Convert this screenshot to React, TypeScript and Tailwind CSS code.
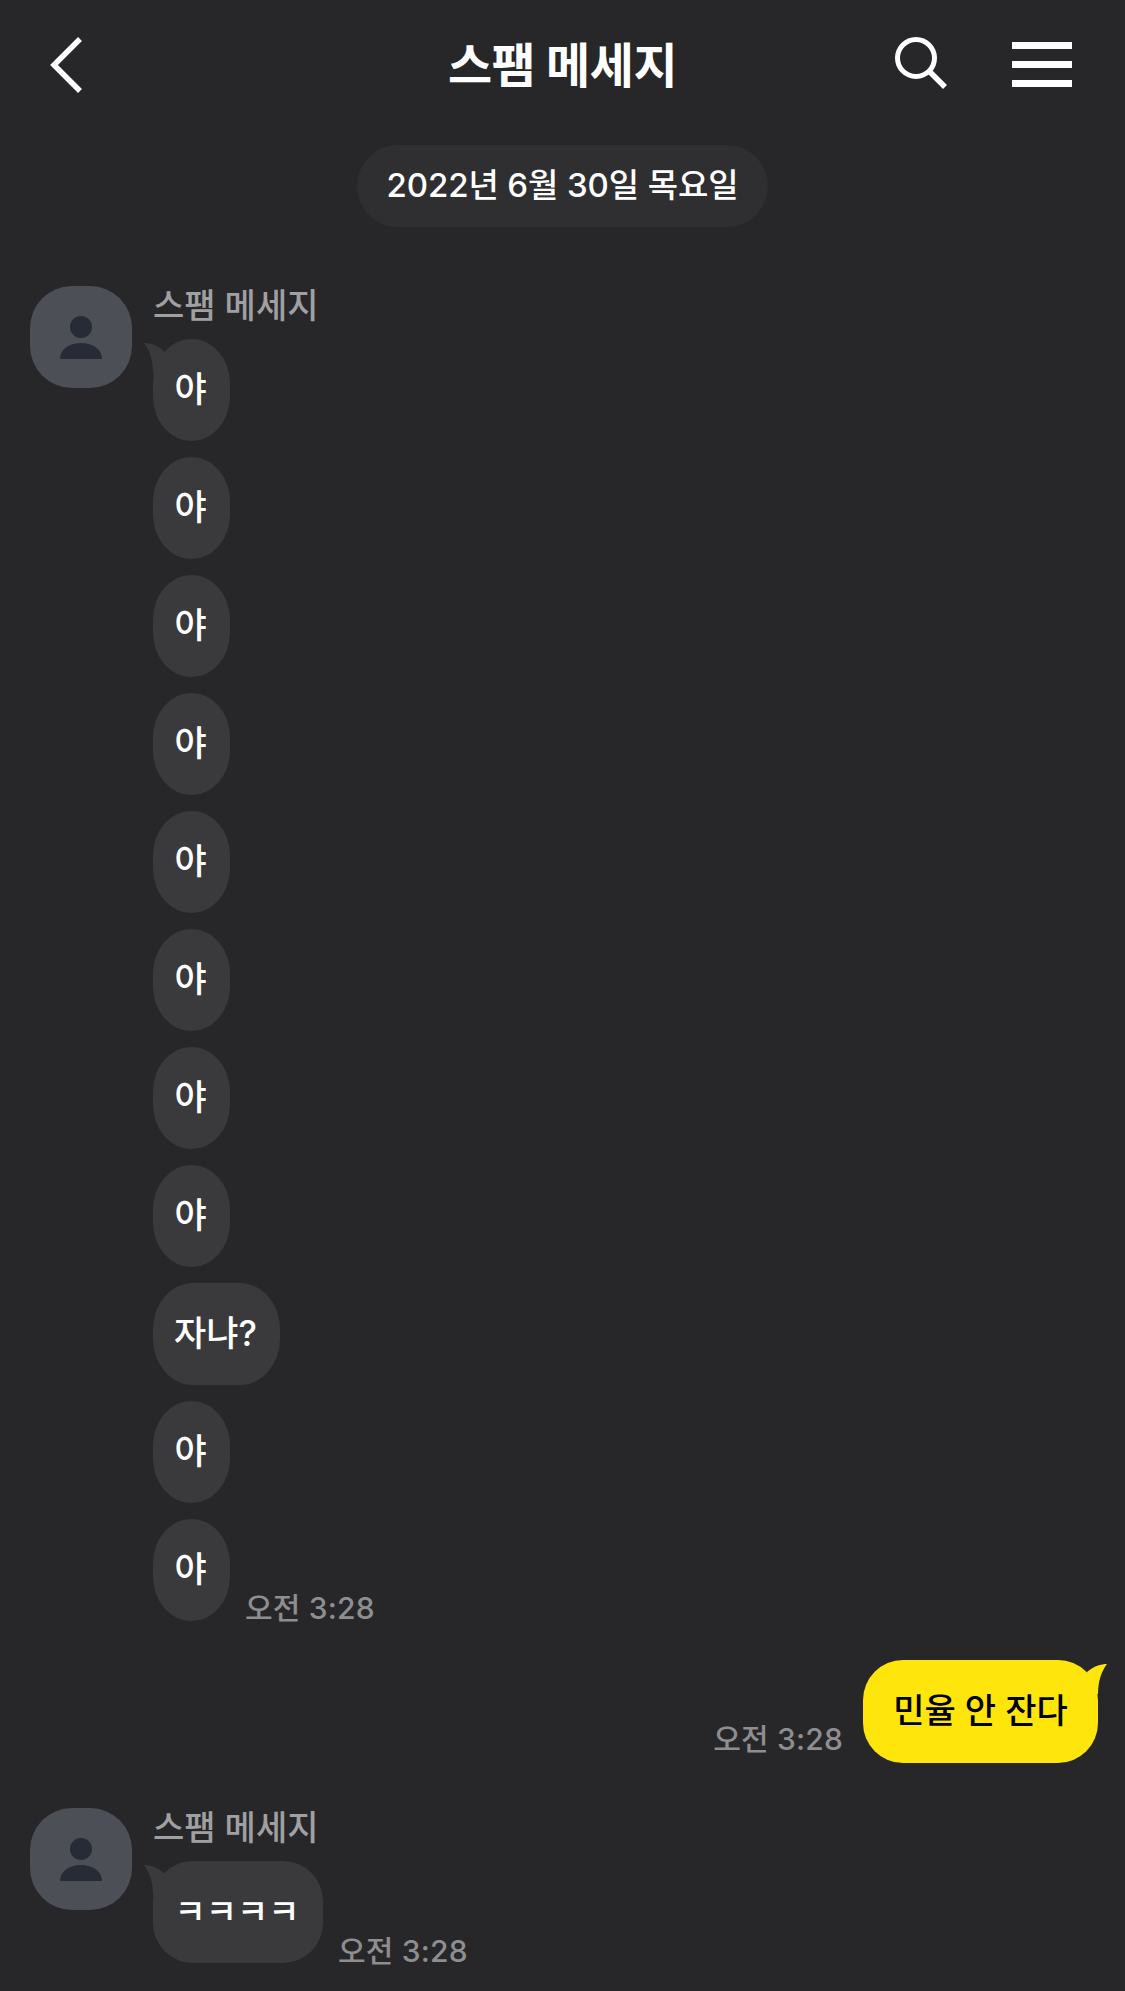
import React from 'react';

const FONT = "font-['Inter','Noto_Sans_CJK_KR',sans-serif]";

function Avatar() {
  return (
    <div className="w-[102px] h-[102px] rounded-[42px] bg-[#4d4f57] flex items-center justify-center shrink-0">
      <svg width="42" height="43" viewBox="0 0 42 43" fill="#262b36">
        <circle cx="21" cy="11" r="11" />
        <path d="M0 43 C0 33.5 9 27 21 27 C33 27 42 33.5 42 43 Z" />
      </svg>
    </div>
  );
}

function Tail({ right }: { right?: boolean }) {
  return (
    <svg
      className={right ? 'absolute right-[-9px] top-[4px]' : 'absolute left-[-9px] top-[4px]'}
      width="22"
      height="30"
      viewBox="0 0 22 30"
      fill={right ? '#fee50c' : '#3a3a3c'}
    >
      {right ? (
        <path d="M22 0 C16 0 9 2 2 8 L4 30 L13 30 C13 18 16 8 22 0 Z" />
      ) : (
        <path d="M0 0 C6 0 13 2 20 8 L18 30 L9 30 C9 18 6 8 0 0 Z" />
      )}
    </svg>
  );
}

function Bubble({ text, tail }: { text: string; tail?: boolean }) {
  return (
    <div className="relative h-[102px] min-w-[77px] px-[22px] rounded-[40px/46px] bg-[#3a3a3c] flex items-center justify-center text-white text-[35px] font-medium">
      {tail && <Tail />}
      <span className="relative right-[1px] -mt-[2px]">{text}</span>
    </div>
  );
}

function Time() {
  return <span className="text-[30px] leading-[34px] font-medium tracking-[0.2px] text-[#8e8e90] whitespace-nowrap">오전 3:28</span>;
}

const spam = ['야', '야', '야', '야', '야', '야', '야', '야', '자냐?', '야', '야'];

export default function App() {
  return (
    <div className={`${FONT} w-[1125px] h-[1991px] overflow-hidden bg-[#27272a]`}>
      {/* 상단 바 */}
      <header className="relative h-[128px] flex items-center justify-center">
        <h1 className="text-[48px] font-bold text-white tracking-[-0.5px] mt-[3px]">스팸 메세지</h1>
        <svg className="absolute left-[49px] top-[36px]" width="34" height="58" viewBox="0 0 34 58" fill="none" stroke="#fff" strokeWidth="5.5">
          <path d="M31 3 L5 29 L31 55" />
        </svg>
        <svg className="absolute left-[894px] top-[36px]" width="54" height="54" viewBox="0 0 54 54" fill="none" stroke="#fff">
          <circle cx="22" cy="22" r="18.5" strokeWidth="5" />
          <path d="M35 35 L51 51" strokeWidth="5.5" />
        </svg>
        <div className="absolute left-[1012px] top-[42px] w-[60px] h-[45px] flex flex-col justify-between">
          <div className="h-[7px] bg-white" />
          <div className="h-[7px] bg-white" />
          <div className="h-[7px] bg-white" />
        </div>
      </header>

      <div className="flex justify-center mt-[17px]">
        <div className="w-[411px] h-[82px] rounded-[41px] bg-[#2f2f31] flex items-center justify-center text-white text-[33px] font-medium tracking-[-0.1px]">
          2022년 6월 30일 목요일
        </div>
      </div>

      {/* 첫번째 묶음 */}
      <div className="flex gap-[21px] pl-[30px] mt-[59px]">
        <Avatar />
        <div className="flex flex-col">
          <div className="h-[53px] text-[34px] leading-[40px] font-medium text-[#a0a0a2]">스팸 메세지</div>
          <div className="flex flex-col items-start gap-[16px]">
            {spam.map((t, i) =>
              i === spam.length - 1 ? (
                <div key={i} className="flex items-end gap-[15px]">
                  <Bubble text={t} />
                  <div className="-mb-[4px]"><Time /></div>
                </div>
              ) : (
                <Bubble key={i} text={t} tail={i === 0} />
              ),
            )}
          </div>
        </div>
      </div>

      {/* 내 메세지 */}
      <div className="flex items-end justify-end gap-[20px] pr-[27px] mt-[39px]">
        <div className="mb-[7px]"><Time /></div>
        <div className="relative h-[103px] w-[235px] rounded-[40px] bg-[#fee50c] flex items-center justify-center text-black text-[34px] font-medium">
          <Tail right />
          <span className="relative -mt-[2px]">민율 안 잔다</span>
        </div>
      </div>

      {/* 마지막 묶음 */}
      <div className="flex gap-[21px] pl-[30px] mt-[45px]">
        <Avatar />
        <div className="flex flex-col">
          <div className="h-[53px] text-[34px] leading-[40px] font-medium text-[#a0a0a2]">스팸 메세지</div>
          <div className="flex items-end gap-[15px]">
            <div className="relative h-[102px] w-[170px] rounded-[40px] bg-[#3a3a3c] flex items-center justify-center text-white text-[34px] font-medium">
              <Tail />
              <span className="relative right-[1px] -mt-[2px]">ㅋㅋㅋㅋ</span>
            </div>
            <div className="-mb-[5px]"><Time /></div>
          </div>
        </div>
      </div>
    </div>
  );
}
